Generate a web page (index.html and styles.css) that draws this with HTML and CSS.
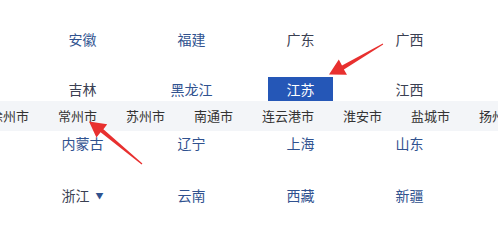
FILE: index.html
```html
<!DOCTYPE html>
<html lang="zh">
<head>
<meta charset="utf-8">
<link rel="stylesheet" href="styles.css">
</head>
<body>
<div class="page">
  <div class="row row1">
    <span class="prov blue">安徽</span>
    <span class="prov blue">福建</span>
    <span class="prov dark">广东</span>
    <span class="prov dark">广西</span>
  </div>
  <div class="row row2">
    <span class="prov dark">吉林</span>
    <span class="prov blue">黑龙江</span>
    <span class="prov"><span class="active">江苏</span></span>
    <span class="prov dark">江西</span>
  </div>
  <div class="band">
    <div class="cities">
      <span>徐州市</span>
      <span>常州市</span>
      <span>苏州市</span>
      <span>南通市</span>
      <span>连云港市</span>
      <span>淮安市</span>
      <span>盐城市</span>
      <span>扬州市</span>
    </div>
  </div>
  <div class="row row3">
    <span class="prov blue">内蒙古</span>
    <span class="prov blue">辽宁</span>
    <span class="prov blue">上海</span>
    <span class="prov blue">山东</span>
  </div>
  <div class="row row4">
    <span class="prov dark">浙江<span class="caret">▼</span></span>
    <span class="prov blue">云南</span>
    <span class="prov blue">西藏</span>
    <span class="prov blue">新疆</span>
  </div>
  <svg class="arrows" width="498" height="231" viewBox="0 0 498 231">
    <polygon fill="#e8302f" points="382.8,43.6 342.0,65.4 338.8,59.6 329,74.5 347.0,74.8 343.9,69.6 383.2,44.4"/>
    <polygon fill="#e8302f" points="141.6,164.5 100.6,132.2 96.4,137.6 89,121.5 107.2,124.2 103.4,129.2 142.4,163.5"/>
  </svg>
</div>
</body>
</html>
```
FILE: styles.css
```css
html, body {
  margin: 0;
  padding: 0;
  background: #ffffff;
}
.page {
  position: relative;
  width: 498px;
  height: 231px;
  overflow: hidden;
  font-family: "Noto Sans CJK SC", "Noto Sans", sans-serif;
}
.row {
  display: grid;
  grid-template-columns: repeat(4, 109px);
  margin-left: 28px;
  font-size: 14px;
  line-height: 24px;
  height: 24px;
}
.row1 { padding-top: 27px; }
.row2 { margin-top: 26px; }
.row4 { margin-top: 28px; }
.prov {
  text-align: center;
  white-space: nowrap;
}
.blue { color: #30528f; }
.dark { color: #3a4052; }
.active {
  display: inline-block;
  width: 65px;
  height: 24px;
  background: #2557b7;
  color: #ffffff;
}
.caret {
  font-size: 8px;
  margin-left: 6px;
  vertical-align: 2px;
  color: #30528f;
}
.band {
  height: 30px;
  background: #f3f5f8;
  overflow: hidden;
}
.cities {
  display: flex;
  gap: 29px;
  margin-left: -10px;
  font-size: 13px;
  line-height: 30px;
  color: #333333;
  white-space: nowrap;
}
.arrows {
  position: absolute;
  left: 0;
  top: 0;
  pointer-events: none;
}
```
